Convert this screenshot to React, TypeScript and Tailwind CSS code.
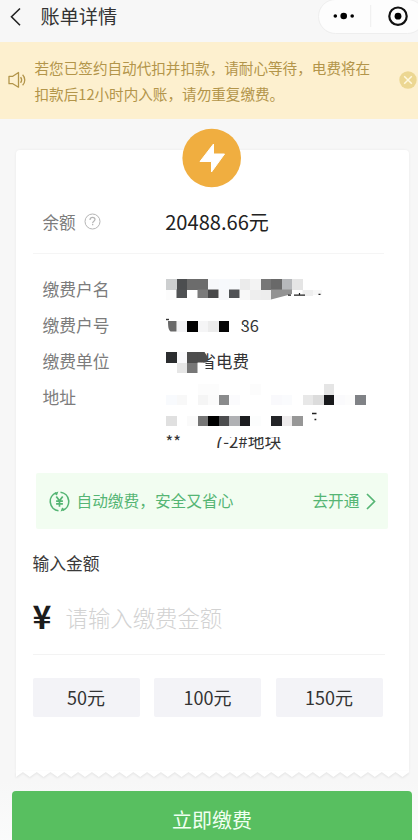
import React from "react";

type Cell = [col: number, row: number, fill: string];

const CELL = 10.5;

const nameCells: Cell[] = [
  [0, 0, "#cdcfd0"], [1, 0, "#4c4e50"], [2, 0, "#6c6c6c"], [3, 0, "#6c6c6c"],
  [4, 0, "#f7f8fa"], [5, 0, "#f7f9fc"], [6, 0, "#f7f9fb"], [7, 0, "#ebebeb"],
  [8, 0, "#f3f3f3"], [9, 0, "#777777"], [10, 0, "#696969"], [11, 0, "#b6b8bb"],
  [12, 0, "#e5e5e5"],
  [0, 1, "#fcfcfc"], [5, 1, "#f7f7fa"], [7, 1, "#f8f8f8"], [8, 1, "#eeeeee"],
  [9, 1, "#ededed"],
];

const numberCells: Cell[] = [
  [1, 0, "#f3f3f5"], [2, 0, "#000000"], [3, 0, "#f5f5f6"], [4, 0, "#ececec"],
  [5, 0, "#050505"],
];

const companyCells: Cell[] = [
  [0, 0, "#2b2d2f"], [1, 0, "#fafafc"], [2, 0, "#4d4d4d"],
  [1, 1, "#e6e6e6"], [2, 1, "#777777"],
];

const addressCells: Cell[] = [
  [3, 0, "#fcfcfc"], [4, 0, "#fcfcfc"], [8, 0, "#fcfcfc"],
  [15, 0, "#e5e5e5"],
  [0, 1, "#f8fafd"], [1, 1, "#f8f8f8"], [3, 1, "#f5f5f5"], [4, 1, "#fbfbfb"],
  [5, 1, "#8a8b8c"], [6, 1, "#fbfbfd"], [10, 1, "#f9f9fc"], [11, 1, "#fafbfd"],
  [13, 1, "#e8e8e8"], [14, 1, "#dcdcdc"], [15, 1, "#18191b"], [16, 1, "#fafafc"],
  [17, 1, "#fcfcfc"], [18, 1, "#808286"],
  [0, 3, "#e0e0e0"], [2, 3, "#fafafa"], [3, 3, "#757575"], [4, 3, "#000000"],
  [5, 3, "#4c4d4f"], [6, 3, "#b0b1b4"], [7, 3, "#1c1d20"], [8, 3, "#fcfdfd"],
  [10, 3, "#232427"], [11, 3, "#eeeced"], [12, 3, "#979797"],
];

const amounts = ["50元", "100元", "150元"];

function Mosaic({
  cells,
  className,
  children,
}: {
  cells: Cell[];
  className: string;
  children?: React.ReactNode;
}) {
  return (
    <svg className={`block shrink-0 overflow-visible ${className}`}>
      {cells.map(([col, row, fill]) => (
        <rect
          key={`${col}-${row}`}
          x={col * CELL}
          y={row * CELL}
          width={CELL}
          height={CELL}
          fill={fill}
          shapeRendering="crispEdges"
        />
      ))}
      {children}
    </svg>
  );
}

function NavBar() {
  return (
    <header className="flex h-[42px] shrink-0 items-start justify-between">
      <div className="flex h-[33px] items-center pl-[10px]">
        <svg className="h-5 w-[11px]" viewBox="0 0 11 20" fill="none">
          <path d="M10 1.5 1.5 9.7 10 18.2" stroke="#222" strokeWidth="1.6" />
        </svg>
        <h1 className="ml-[19.5px] text-[19.2px] leading-[33px] text-[#333]">账单详情</h1>
      </div>
      <div className="-mt-px -mr-[7px] flex h-[35px] w-[107px] items-center rounded-full border border-[#eeeeee] bg-[#fdfdfd]">
        <svg className="h-[33px] w-[105px]" viewBox="0 0 105 33">
          <circle cx="16.3" cy="16" r="1.8" />
          <circle cx="24.7" cy="16" r="3.3" />
          <circle cx="33.2" cy="16" r="1.8" />
          <path d="M51.7 5v22" stroke="#eeeeee" />
          <circle cx="79" cy="16.2" r="8.7" fill="none" stroke="#111" strokeWidth="2.2" />
          <circle cx="79" cy="16.2" r="3.4" />
        </svg>
      </div>
    </header>
  );
}

function Notice() {
  return (
    <div className="flex h-[77px] shrink-0 items-center bg-[#fdf0cf] pl-2 text-[#b3954a]">
      <svg
        className="mb-px h-[18px] w-[19px] shrink-0"
        viewBox="0 0 19 18"
        fill="none"
        stroke="currentColor"
        strokeWidth="1.3"
        strokeLinejoin="round"
      >
        <path d="M1 5.3h3.8L10.5 1.5v14.7L4.8 12.7H1z" />
        <path d="M12.6 6.2c1.2 1.6 1.2 4 0 5.6M14.6 3.8c2.9 2.9 2.9 7.5 0 10.4" />
      </svg>
      <p className="ml-[7.5px] w-[345px] shrink-0 text-[14.6px] leading-[26px] whitespace-nowrap">
        若您已签约自动代扣并扣款，请耐心等待，电费将在
        <br />
        扣款后12小时内入账，请勿重复缴费。
      </p>
      <svg className="mb-px ml-[19px] h-[18px] w-[18px] shrink-0" viewBox="0 0 18 18">
        <circle cx="9" cy="9" r="8.7" fill="#ecd793" />
        <path d="m5.2 5.2 7.6 7.6m0-7.6-7.6 7.6" stroke="#fff8df" strokeWidth="1.5" />
      </svg>
    </div>
  );
}

function Row({ label, children }: { label: string; children: React.ReactNode }) {
  return (
    <div className="flex h-9">
      <dt className="w-[123px] shrink-0 text-[16.8px] leading-9 text-[#7c7c7c]">{label}</dt>
      <dd className="flex text-[16.5px] leading-9 text-[#333]">{children}</dd>
    </div>
  );
}

function BillInfo() {
  return (
    <dl className="mt-[17px] h-[202px] pl-[10px]">
      <Row label="缴费户名">
        <Mosaic cells={nameCells} className="mt-[8px] h-[21px] w-[158px]">
          <path d="M10.5 10.5H21V19H10.5z" fill="#4f5153" />
          <path d="M31.5 10.5H42V19H31.5z" fill="#7b7b7b" />
          <path d="M42 10.5h10.5V19H42z" fill="#484849" />
          <path d="M63 10.5h10.5V19H63z" fill="#505255" />
          <path d="M105 10.5h21V15l-21 5.5z" fill="#929292" />
          <path d="M136.5 11H147v6h-10.5z" fill="#efefef" />
          <path d="M147 11h9v5h-9z" fill="#f7f7f7" />
          <path d="M122 16.1h3m3 0h11m-5.5-2v2m19-.8h2" stroke="#222" strokeWidth="1.2" />
        </Mosaic>
      </Row>
      <Row label="缴费户号">
        <Mosaic cells={numberCells} className="mt-[14px] h-[11px] w-[75px]">
          <path d="M2 0h8.5v10.5h-6C2.5 9 2 6 2 0z" fill="#696969" />
          <path d="M0-1.5h3" stroke="#333" strokeWidth="1.4" />
        </Mosaic>
        {/* the first digit is cut by the masked area */}
        <span className="relative">
          86
          <span className="absolute top-[18px] left-0 h-[4px] w-[3px] bg-white" />
        </span>
      </Row>
      <Row label="缴费单位">
        <span className="relative flex pl-[34px]">
          省电费
          <span className="absolute top-[9px] left-0">
            <Mosaic cells={companyCells} className="h-[21px] w-[42px]">
              <path d="M31.5 10.5h8v10.5h-8z" fill="#fff" />
              <path d="M31.5 0h7l3.5 5.5-1.5 5h-9z" fill="#4d4d4d" />
            </Mosaic>
          </span>
        </span>
      </Row>
      <Row label="地址">
        <div>
          <Mosaic cells={addressCells} className="mt-[5px] h-[48px] w-[200px]">
            <path d="M146 29.5h4.5m-2 6h1.8" stroke="#222" strokeWidth="1.5" />
          </Mosaic>
          <div className="relative flex h-[22px] leading-[18px]">
            <span>**</span>
            <span className="ml-[33px] text-[16.8px]">7-2#地块</span>
            <span className="absolute -top-px left-[46px] h-[6px] w-[72px] bg-white" />
          </div>
        </div>
      </Row>
    </dl>
  );
}

function AutoPayBanner() {
  return (
    <div className="ml-[3px] flex h-[56px] w-[352px] items-center rounded-[2px] bg-[#f2fdf1] pl-[13px] text-[15.7px] text-[#55b574]">
      <svg className="h-[21px] w-[21px]" viewBox="0 0 21 21" fill="none" stroke="currentColor">
        <path d="M7.2 1.8A9.3 9.3 0 0 0 9.5 19.7M13.8 19.2A9.3 9.3 0 0 0 11.5 1.3" strokeWidth="1.6" />
        <path d="m4.7 2.2 4.7-1.6-1.5 4zM16.3 18.8l-4.7 1.6 1.5-4z" fill="currentColor" stroke="none" />
        <path d="m7.3 5.4 3.2 4.4 3.2-4.4M10.5 9.7v6M7.1 10.2h6.8M7.1 12.9h6.8" strokeWidth="1.7" />
      </svg>
      <span className="ml-[7px]">自动缴费，安全又省心</span>
      <span className="ml-[79px]">去开通</span>
      <svg className="ml-[7px] h-[17px] w-[10px]" viewBox="0 0 10 17" fill="none">
        <path d="m1 1 7.5 7.5L1 16" stroke="currentColor" strokeWidth="1.7" />
      </svg>
    </div>
  );
}

function TornEdge() {
  const teeth = Array.from({ length: 29 }, (_, i) => `${i * 13.8 + 6.9},1 ${(i + 1) * 13.8},6`);
  return (
    <svg className="block h-[9px] w-[393px] shrink-0 drop-shadow-[0_1px_1px_rgba(0,0,0,0.09)]" viewBox="0 0 393 9">
      <polygon points={`0,0 0,6 ${teeth.join(" ")} 393,0`} fill="#fff" />
    </svg>
  );
}

export default function App() {
  return (
    <main className="flex h-[840px] w-[418px] flex-col overflow-hidden bg-[#f7f7f7] font-['Noto_Sans_CJK_SC','Noto_Sans',sans-serif]">
      <NavBar />
      <Notice />

      <section className="mt-[31px] ml-[15.5px] flex h-[621px] w-[393px] shrink-0 flex-col rounded-t-[4px] bg-white px-[17px] shadow-[0_0_3px_rgba(0,0,0,0.06)]">
        <svg className="-mt-[22px] ml-[149.5px] h-[60px] w-[60px] shrink-0" viewBox="0 0 60 60">
          <circle cx="29.7" cy="30" r="29.3" fill="#f0ae40" />
          <path
            d="M31.5 16v10h11L29.5 44V33.5H18z"
            fill="#fff"
            stroke="#fff"
            strokeWidth="1"
            strokeLinejoin="round"
          />
        </svg>

        <div className="mt-[15px] flex h-[38px] items-center pl-[10px]">
          <span className="text-[16.6px] text-[#7c7c7c]">余额</span>
          <svg className="mb-px ml-[8px] h-[17px] w-[17px]" viewBox="0 0 17 17" fill="none" stroke="#b5b5b5">
            <circle cx="8.5" cy="8.5" r="7.5" />
            <path d="M6 7c0-1.8 1.1-2.7 2.5-2.7S11 5.2 11 6.5c0 1.7-2.4 1.8-2.4 3.7" strokeWidth="1.2" />
            <path d="M8 11.7h1.3" strokeWidth="1.3" />
          </svg>
          <span className="ml-[64.5px] text-[20.1px] text-[#222]">20488.66元</span>
        </div>
        <hr className="mt-[12px] w-[351px] border-[#f5f5f5]" />

        <BillInfo />
        <AutoPayBanner />

        <h2 className="mt-[22px] text-[16.8px] leading-6 text-[#3a3a3a]">输入金额</h2>
        <div className="mt-[20px] flex h-[44px] items-center">
          <span className="mb-[4px] w-[33px] text-[32px] leading-[40px] font-bold text-[#1c1c1c]">¥</span>
          <span className="text-[22.4px] leading-[44px] font-light text-[#d2d2d2]">请输入缴费金额</span>
        </div>
        <hr className="mt-[15px] w-[352px] border-[#f3f3f3]" />

        <div className="mt-[23px] flex gap-[14.5px]">
          {amounts.map((amount) => (
            <button
              key={amount}
              className="h-[39px] w-[107px] rounded-[2px] bg-[#f3f3f7] text-[18px] leading-[39px] text-[#333]"
            >
              {amount}
            </button>
          ))}
        </div>
      </section>
      <div className="flex shrink-0 flex-col pl-[15.5px]">
        <TornEdge />
      </div>

      <footer className="shrink-0 bg-linear-to-b from-[#f7f7f7] to-[#fbfcfc] px-[12px] pt-[11px]">
        <button className="h-[58px] w-[400px] rounded-[4px] bg-[#58bf60] text-[20px] leading-[58px] text-[#f0fff1]">
          立即缴费
        </button>
      </footer>
    </main>
  );
}
